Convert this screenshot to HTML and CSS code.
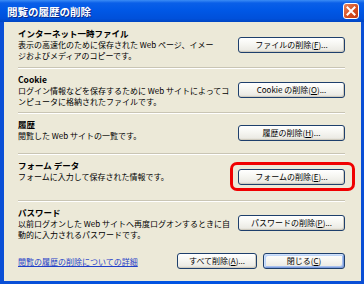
FILE: index.html
```html
<!DOCTYPE html>
<html lang="ja">
<head>
    <meta charset="UTF-8">
    <meta name="viewport" content="width=device-width, initial-scale=1.0">
    <title>閲覧の履歴の削除</title>
    <link rel="stylesheet" href="styles.css">
</head>
<body>

    <div class="window">
        <div class="titlebar">
            <span class="title">閲覧の履歴の削除</span>
            <span class="close-box">
                <svg width="16" height="16" viewBox="0 0 16 16">
                    <path d="M4.5 4.5 L11.5 11.5 M11.5 4.5 L4.5 11.5" stroke="#fff" stroke-width="2" stroke-linecap="square"/>
                </svg>
            </span>
        </div>

        <div class="dialog">
            <div class="section">
                <div class="info">
                    <div class="head">インターネット一時ファイル</div>
                    <div class="desc">表示の高速化のために保存された Web ページ、イメー<br>ジおよびメディアのコピーです。</div>
                </div>
                <button class="btn">ファイルの削除(<u>F</u>)...</button>
            </div>

            <div class="section">
                <div class="info">
                    <div class="head">Cookie</div>
                    <div class="desc">ログイン情報などを保存するために Web サイトによってコ<br>ンピュータに格納されたファイルです。</div>
                </div>
                <button class="btn">Cookie の削除(<u>O</u>)...</button>
            </div>

            <div class="section">
                <div class="info">
                    <div class="head">履歴</div>
                    <div class="desc">閲覧した Web サイトの一覧です。</div>
                </div>
                <button class="btn">履歴の削除(<u>H</u>)...</button>
            </div>

            <div class="section">
                <div class="info">
                    <div class="head">フォーム データ</div>
                    <div class="desc">フォームに入力して保存された情報です。</div>
                </div>
                <button class="btn marked">フォームの削除(<u>E</u>)...</button>
            </div>

            <div class="section sec-last">
                <div class="info">
                    <div class="head">パスワード</div>
                    <div class="desc">以前ログオンした Web サイトへ再度ログオンするときに自<br>動的に入力されるパスワードです。</div>
                </div>
                <button class="btn">パスワードの削除(<u>P</u>)...</button>
            </div>

            <div class="footer">
                <a class="more" href="#">閲覧の履歴の削除についての詳細</a>
                <button class="btn btn-all">すべて削除(<u>A</u>)...</button>
                <button class="btn btn-close">閉じる(<u>C</u>)</button>
            </div>
        </div>
    </div>

</body>
</html>
```

FILE: styles.css
```css
/* Global Style */
html, body {
    margin: 0;
    padding: 0;
}

body {
    width: 364px;
    height: 284px;
    overflow: hidden;
    font-family: "Noto Sans CJK JP", "Liberation Sans", sans-serif;
    font-size: 8px;
    color: #000;
}

.window {
    height: 284px;
    display: flex;
    flex-direction: column;
    background: linear-gradient(to right, #0A4FD6, #0054E3 50%, #0A4FD6);
}

/* Title bar */
.titlebar {
    height: 22px;
    display: flex;
    align-items: center;
    justify-content: space-between;
    padding: 0 5px 0 7px;
    background: linear-gradient(to bottom, #3B8CF5 0, #0A5FE8 3px, #0058E6 45%, #0050DA 85%, #0045C2 100%);
}

.title {
    color: #fff;
    font-size: 10.5px;
    font-weight: bold;
    text-shadow: 1px 1px 0 #0A2A8A;
}

.close-box {
    width: 16px;
    height: 16px;
    display: flex;
    border: 1px solid #fff;
    border-radius: 3px;
    background: linear-gradient(135deg, #E9845C, #D24A1E 60%, #C23A12);
    box-sizing: border-box;
}

.close-box svg {
    margin: -1px;
}

/* Dialog body */
.dialog {
    flex: 1;
    min-width: 0;
    margin: 0 3px 3px 4px;
    padding: 0 16px 0 14px;
    background-color: #ECE9D8;
    display: grid;
    grid-template-columns: minmax(0, 1fr);
    grid-template-rows: 46px 45px 41px 47px 44px 1fr;
}

.section {
    display: flex;
    align-items: center;
    justify-content: space-between;
    min-width: 0;
    border-bottom: 1px solid #C9C5B4;
    box-shadow: 0 1px 0 #fff;
}

.sec-last {
    border-bottom: none;
    box-shadow: none;
}

.info {
    align-self: flex-start;
    padding-top: 6px;
    line-height: 11px;
    min-width: 0;
}

.head {
    font-weight: bold;
    font-size: 8.5px;
}

.desc {
    white-space: nowrap;
}

/* Buttons */
.btn {
    width: 107px;
    height: 16px;
    padding: 0;
    font-family: inherit;
    font-size: 8px;
    line-height: 14px;
    color: #000;
    border: 1px solid #1E3F6C;
    border-radius: 3px;
    background: linear-gradient(to bottom, #FFFFFF 0, #F7F7F3 40%, #ECEBE5 85%, #D8D4C8 100%);
    box-shadow: inset -1px -1px 0 #D0CCC0;
    flex-shrink: 0;
    position: relative;
}

.marked::after {
    content: "";
    position: absolute;
    left: -9px;
    right: -11px;
    top: -8px;
    bottom: -7px;
    border: 3px solid #F00000;
    border-radius: 7px;
}

/* Footer */
.footer {
    display: flex;
    align-items: center;
    padding-bottom: 4px;
}

.more {
    flex: 1;
    color: #1F3FC8;
    text-decoration: underline;
}

.btn-all {
    width: 80px;
    margin-right: 6px;
}

.btn-close {
    width: 82px;
    box-shadow: inset 1px 1px 0 #CEE0FB, inset -1px -1px 0 #7D9CDC, inset 2px 2px 0 #BBD3F7, inset -2px -2px 0 #A7C0EE;
}
```
